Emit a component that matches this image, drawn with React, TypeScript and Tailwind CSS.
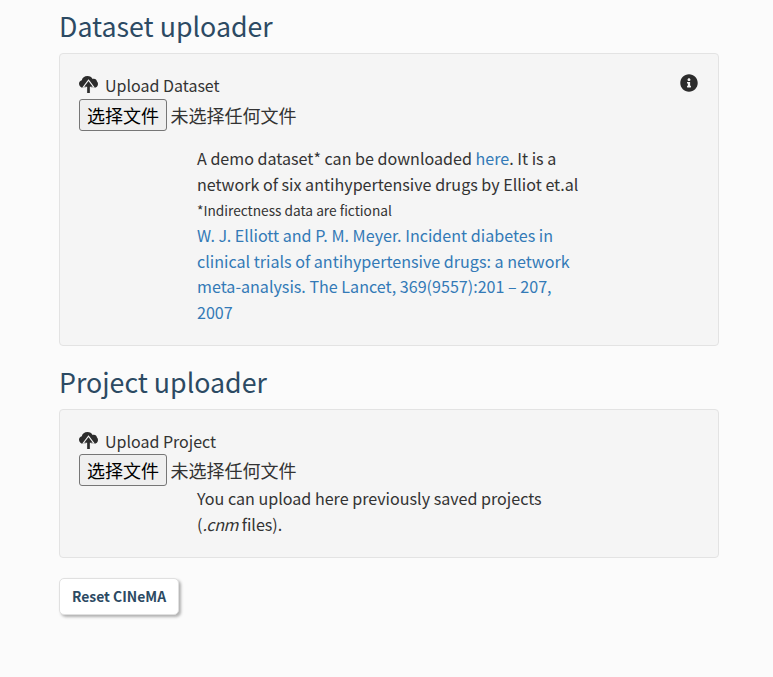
import { FaInfoCircle } from "react-icons/fa";

const font = "font-['Noto_Sans_CJK_SC','Liberation_Sans',sans-serif]";

function CloudUpload() {
  return (
    <svg viewBox="0 0 19 18" className="w-[19px] h-[18px] mr-[7px] mt-[-3px] shrink-0">
      <path
        d="M4 11.8C1.8 11.8 0 10 0 7.8 0 6 1.2 4.6 2.8 4.2 3.2 1.8 5.5 0 8.5 0c2.3 0 4.3 1.2 5.1 3 .4-.1.8-.2 1.2-.2 1.8 0 3 1.2 3.2 2.8.6.6 1 1.4 1 2.3 0 2-1.6 3.9-3.8 3.9z"
        fill="#2c2c2c"
      />
      <path
        d="M9.5 4.2 14.8 11.2H11.4V17.6H7.6V11.2H4.2Z"
        fill="#2c2c2c"
        stroke="#f5f5f5"
        strokeWidth="1.1"
      />
    </svg>
  );
}

function Picker() {
  return (
    <div className="flex items-center h-[32px] text-[18px] leading-[32px] text-[#333333]">
      <button className="h-[32px] w-[88px] rounded-[3px] border border-[#767676] bg-[#efefef] text-black text-[18px] leading-none">
        选择文件
      </button>
      <span className="ml-[3.5px]">未选择任何文件</span>
    </div>
  );
}

function Label({ children }: { children: string }) {
  return (
    <div className="flex items-center h-[22px] text-[16px] leading-[22px] text-[#333333]">
      <CloudUpload />
      <span className="mt-[-2px]">{children}</span>
    </div>
  );
}

export default function App() {
  return (
    <div className={`${font} min-h-[677px] bg-[#fbfbfb] px-[59px] text-[#333333]`}>
      <div className="w-[660px]">
        <h2 className="pt-[8px] h-[53px] text-[26.75px] leading-[36px] font-normal text-[#2c4a63]">Dataset uploader</h2>
        <section className="relative h-[293px] rounded-[4px] border border-[#e3e3e3] bg-[#f5f5f5] pt-[21px] pl-[19px]">
          <FaInfoCircle className="absolute right-[20px] top-[20px] w-[18px] h-[18px] text-[#2c2c2c]" />
          <Label>Upload Dataset</Label>
          <div className="mt-[2px]">
            <Picker />
          </div>
          <div className="ml-[118px] mt-[15px] w-[390px] text-[16.1px] leading-[26px]">
            <p className="leading-[25.5px]">
              A demo dataset* can be downloaded <a className="text-[#337ab7]">here</a>. It is a network of six antihypertensive drugs by Elliot et.al
            </p>
            <p className="text-[13.7px] leading-[26px]">*Indirectness data are fictional</p>
            <p className="text-[#337ab7] leading-[25.5px]">
              W. J. Elliott and P. M. Meyer. Incident diabetes in clinical trials of antihypertensive drugs: a network meta-analysis. The Lancet, 369(9557):201 – 207, 2007
            </p>
          </div>
        </section>
        <h2 className="pt-[18px] h-[63px] text-[26.75px] leading-[36px] font-normal text-[#2c4a63]">Project uploader</h2>
        <section className="h-[149px] rounded-[4px] border border-[#e3e3e3] bg-[#f5f5f5] pt-[21px] pl-[19px]">
          <Label>Upload Project</Label>
          <div className="mt-[1px]">
            <Picker />
          </div>
          <p className="ml-[118px] w-[390px] text-[16.1px] leading-[26px] mt-[-1px]">
            You can upload here previously saved projects
            <br />
            (<i className="tracking-[-0.4px]">.cnm</i> files).
          </p>
        </section>
        <button className="mt-[20px] h-[37px] w-[120px] rounded-[5px] border border-[#e0e0e0] bg-white text-[13.9px] font-semibold text-[#2c4a63] shadow-[2px_2px_3px_rgba(0,0,0,0.3)]">
          Reset CINeMA
        </button>
      </div>
    </div>
  );
}
